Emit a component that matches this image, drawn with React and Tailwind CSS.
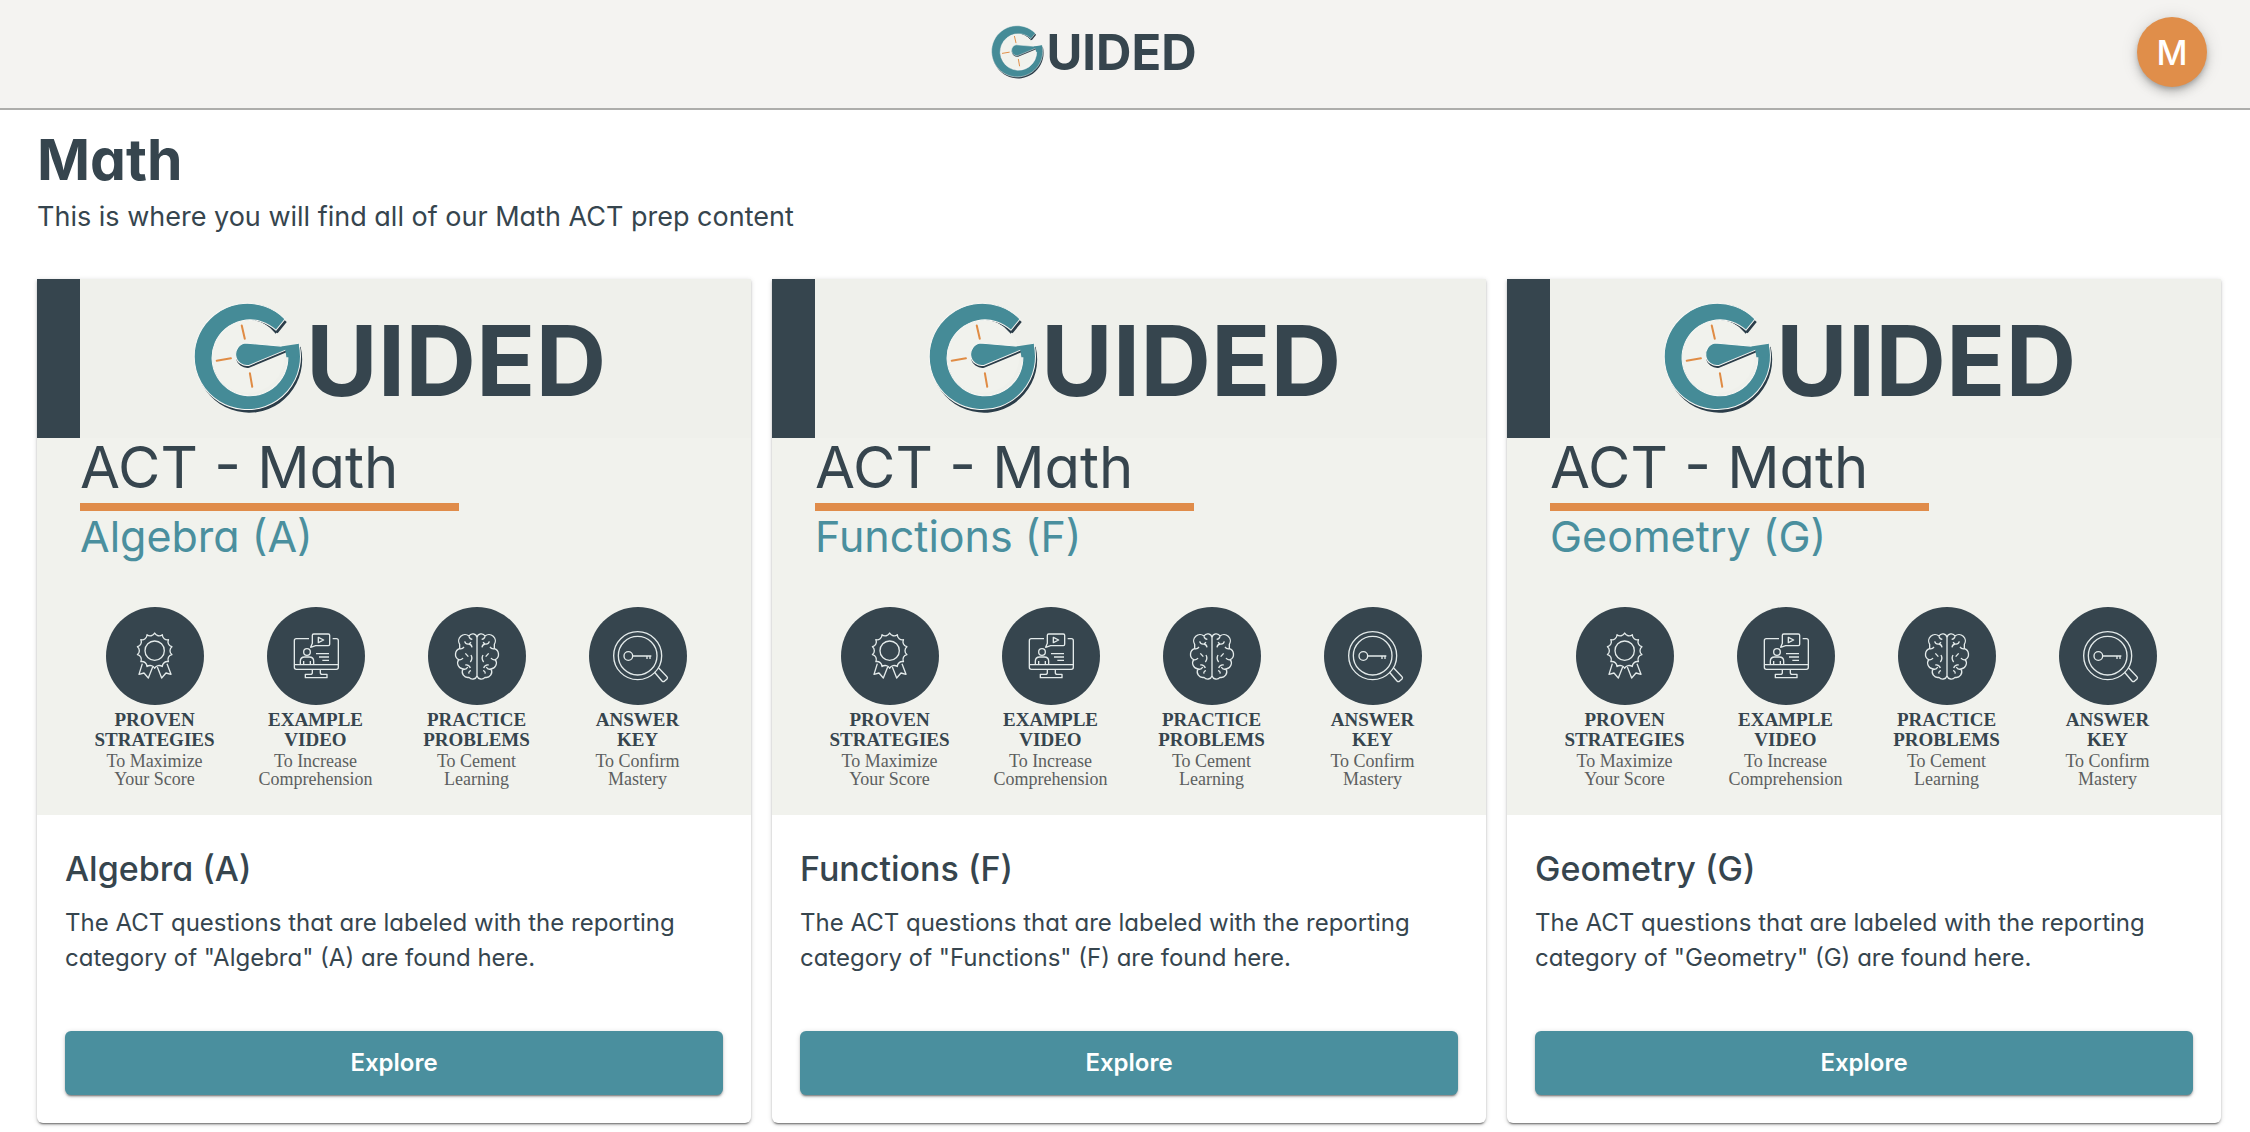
import React from 'react';
import clsx from 'clsx';

const categories = [
    { name: 'Algebra', letter: 'A' },
    { name: 'Functions', letter: 'F' },
    { name: 'Geometry', letter: 'G' },
];

const ringPath = 'M312 92 A157 157 0 1 0 353 165 L316 176 A112 112 0 1 1 285 125 Z';
const needlePath = 'M194 163 L335 175 L205 229 A33 33 0 1 1 194 163 Z';

// 14 pointed scallops around the medal
const scallops = Array.from({ length: 14 }, (_, i) => {
    const angle = (i * Math.PI) / 7 - Math.PI / 2;
    const x = (223 + 53 * Math.cos(angle)).toFixed(1);
    const y = (182 + 53 * Math.sin(angle)).toFixed(1);
    return i === 0 ? `M${x} ${y}` : `A15 15 0 0 0 ${x} ${y}`;
}).join(' ') + ' A15 15 0 0 0 223 129 Z';

const Logo = ({ small }) => (
    <div className={clsx('flex items-center', small ? 'gap-[2px]' : 'gap-[3px]')} role="img" aria-label="Guided">
        <svg viewBox="40 30 325 372" className={small ? 'w-[53px] h-[61px]' : 'w-[110px] h-[126px]'}>
            <g fill="#2b3d49" transform="translate(5 9)">
                <path d={ringPath} />
            </g>
            <circle cx="202" cy="202" r="108" fill="#f1f2ed" />
            <path d="M92 206 A112 112 0 0 1 203 89 A112 112 0 0 1 284 131 L290 125" fill="none" stroke="#2b3d49" strokeWidth="6" />
            <path d={ringPath} fill="#458b97" stroke="#f7f7f4" strokeWidth="3" />
            <path d={needlePath} fill="#2b3d49" transform="translate(1 7)" />
            <path d={needlePath} fill="#458b97" stroke="#f7f7f4" strokeWidth="3" />
            <path d="M300 173 L353 165 L349 205 L316 205 L312 180 Z" fill="#458b97" />
            <g stroke="#e08c45" strokeWidth="6" strokeLinecap="round">
                <path d="M184 111 L193 150" />
                <path d="M110 215 L152 208" />
                <path d="M208 252 L215 292" />
            </g>
        </svg>
        <span className={clsx('font-bold text-[#36454e]', small ? 'text-[49px] leading-[60px]' : 'text-[98px] leading-[124px]')}>
            UIDED
        </span>
    </div>
);

const MedalIcon = () => (
    <svg viewBox="77 51 294 294">
        <path d={scallops} />
        <circle cx="223" cy="182" r="29" />
        <path d="M186 221 L176 253 L191 249 L204 264 L217 231" />
        <path d="M260 221 L272 253 L257 249 L244 264 L231 231" />
    </svg>
);

const VideoIcon = () => (
    <svg viewBox="558 51 294 294">
        <path d="M684 146 H646 Q640 146 640 152 V232 Q640 238 646 238 H766 Q772 238 772 232 V152 Q772 146 766 146 H755" />
        <path d="M640 224 H772" />
        <path d="M694 238 V248 Q694 253 688 253 H673 V263 H738 V253 H724 Q718 253 718 248 V238" />
        <path d="M694 160 V136 Q694 132 698 132 H742 Q746 132 746 136 V163 Q746 167 742 167 H704 L689 172 Z" />
        <path d="M712 142 V158 L728 150 Z" />
        <circle cx="678" cy="186" r="10" />
        <path d="M658 222 V214 Q658 201 671 201 H685 Q698 201 698 214 V222 M668 222 V213 M688 222 V213" />
        <path d="M705 191 H744 M714 201 H744 M724 211 H744" />
    </svg>
);

const BrainHalf = () => (
    <>
        <path d="M226 142 A13 13 0 0 0 202 138 A19 19 0 0 0 174 163 V176 A18 18 0 0 0 171 209 A18 18 0 0 0 184 237 A17 17 0 0 0 202 262 A14 14 0 0 0 226 258" />
        <path d="M202 139 Q204 147 212 148 M174 176 Q182 178 187 171 M171 209 Q180 211 184 204 M184 237 Q194 240 198 231" />
        <path d="M189 154 Q192 164 202 162 M202 162 Q210 164 211 172 M202 162 L208 157 M191 190 L200 200 M208 195 Q214 206 206 216 M191 225 Q202 223 206 234 M202 251 Q200 244 208 242" />
    </>
);

const BrainIcon = () => (
    <svg viewBox="79 51 294 294">
        <path d="M226 142 V258" />
        <BrainHalf />
        <g transform="translate(452 0) scale(-1 1)">
            <BrainHalf />
        </g>
    </svg>
);

const KeyIcon = () => (
    <svg viewBox="561 51 294 294">
        <circle cx="707" cy="197" r="72" />
        <circle cx="707" cy="197" r="58" />
        <circle cx="679" cy="198" r="13" />
        <path d="M692 198 H748 M735 199 V207 M744 199 V207" />
        <path d="M757 246 L780 273 Q784 277 788 273 L795 267 Q798 263 795 260 L770 234" />
    </svg>
);

const features = [
    { icon: MedalIcon, title: ['PROVEN', 'STRATEGIES'], text: ['To Maximize', 'Your Score'] },
    { icon: VideoIcon, title: ['EXAMPLE', 'VIDEO'], text: ['To Increase', 'Comprehension'] },
    { icon: BrainIcon, title: ['PRACTICE', 'PROBLEMS'], text: ['To Cement', 'Learning'] },
    { icon: KeyIcon, title: ['ANSWER', 'KEY'], text: ['To Confirm', 'Mastery'] },
];

const Feature = ({ icon: Icon, title, text }) => (
    <div className="flex flex-col items-center text-center font-['Liberation_Serif',serif]">
        <div className="w-[98px] h-[98px] rounded-full bg-[#36454e] fill-none stroke-[#e3eaea] stroke-4 [stroke-linejoin:round]">
            <Icon />
        </div>
        <div className="mt-[5px] text-[19px] leading-[20px] font-bold text-[#36454e]">
            {title.map((line) => <div key={line}>{line}</div>)}
        </div>
        <div className="mt-[2px] text-[18px] leading-[18px] text-[#5c5f5f]">
            {text.map((line) => <div key={line}>{line}</div>)}
        </div>
    </div>
);

const Cover = ({ label }) => (
    <div className="aspect-4/3 bg-[#f1f2ed] overflow-hidden">
        <div className="flex h-[159px] bg-[#eff0eb]">
            <div className="w-[43px] bg-[#36454e]" />
            <div className="flex items-center pl-[113px] pt-1">
                <Logo />
            </div>
        </div>
        <div className="pl-[43px]">
            <div className="text-[58px] leading-[58px] text-[#36454e]">ACT - Math</div>
            <div className="mt-[7px] w-[379px] h-[8px] bg-[#e08c4a]" />
            <div className="text-[43px] leading-[50px] text-[#4a8f9e]">{label}</div>
        </div>
        <div className="mt-[46px] ml-[37px] mr-[33px] grid grid-cols-4">
            {features.map((feature) => (
                <Feature key={feature.title[0]} {...feature} />
            ))}
        </div>
    </div>
);

const CategoryCard = ({ name, letter }) => {
    const label = `${name} (${letter})`;
    const description = `The ACT questions that are labeled with the reporting category of "${name}" (${letter}) are found here.`;

    return (
        <article className="rounded-b-[6px] overflow-hidden bg-white shadow-[0_3px_1px_-2px_rgba(0,0,0,0.3),0_2px_2px_rgba(0,0,0,0.2),0_1px_5px_rgba(0,0,0,0.16)]">
            <Cover label={label} />
            <div className="px-[28px] pt-[34px] pb-[28px]">
                <h2 className="text-[34px] leading-[40px] font-medium">{label}</h2>
                <p className="mt-4 text-[24px] leading-[35px]">{description}</p>
                <button
                    type="button"
                    className="mt-14 w-full h-[64px] rounded-[6px] bg-[#4a8f9e] hover:bg-[#3d7c8a] text-white text-[24px] font-semibold shadow-[0_3px_1px_-2px_rgba(0,0,0,0.25),0_2px_2px_rgba(0,0,0,0.2),0_1px_5px_rgba(0,0,0,0.16)]"
                >
                    Explore
                </button>
            </div>
        </article>
    );
};

const App = () => (
    <div className="min-h-screen bg-white text-[#36454e] font-['Inter',sans-serif] [font-feature-settings:'cv11']">
        <header className="flex items-center h-[110px] pl-[51px] pr-[43px] bg-[#f4f3f1] border-b-2 border-[#adadab]">
            <div className="flex-1 flex justify-center pb-[2px]">
                <Logo small />
            </div>
            <button
                type="button"
                aria-label="M account menu"
                className="w-[70px] h-[70px] mb-1 rounded-full bg-[#e08e4a] text-white text-[34px] font-medium shadow-[0_3px_5px_-1px_rgba(0,0,0,0.2),0_6px_10px_rgba(0,0,0,0.14),0_1px_18px_rgba(0,0,0,0.12)]"
            >
                M
            </button>
        </header>

        <main className="pl-[37px] pr-[29px] pt-[18px]">
            <h1 className="text-[57px] leading-[64px] font-bold">Math</h1>
            <p className="mt-[5px] text-[27px] leading-[40px]">
                This is where you will find all of our Math ACT prep content
            </p>

            <div className="mt-[42px] grid grid-cols-3 gap-[21px]">
                {categories.map((category) => (
                    <CategoryCard key={category.letter} {...category} />
                ))}
            </div>
        </main>
    </div>
);

export default App;
